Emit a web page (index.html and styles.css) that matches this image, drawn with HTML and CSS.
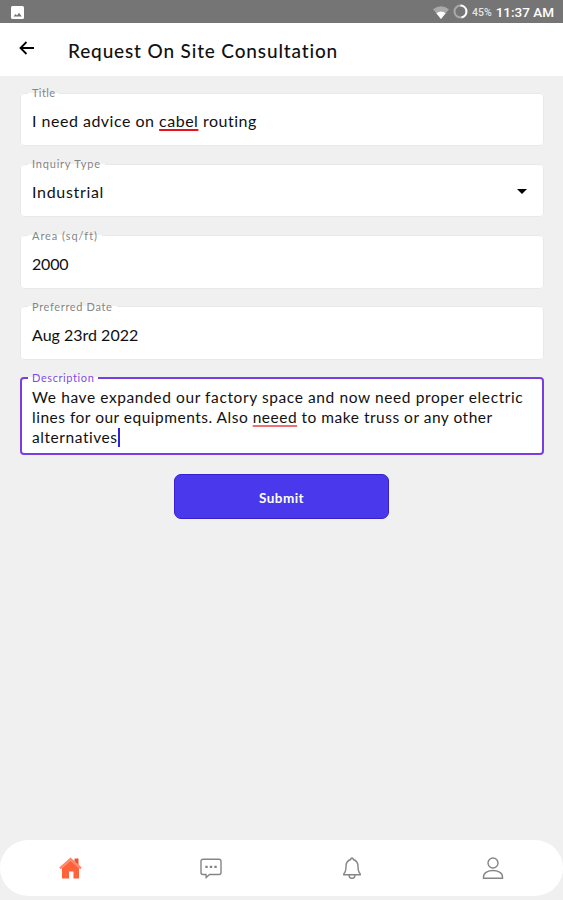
FILE: index.html
```html
<!DOCTYPE html>
<html lang="en">
<head>
    <meta charset="UTF-8">
    <meta name="viewport" content="width=device-width, initial-scale=1.0">
    <title>Request On Site Consultation</title>
    <link rel="stylesheet" href="styles.css">
</head>
<body>
    <div class="status-bar">
        <svg width="13" height="13" viewBox="0 0 13 13">
            <rect width="13" height="13" rx="1.5" fill="#fff"/>
            <path d="M2.5 10.5l2-2.6 1.5 1.5 2-2.6 2.8 3.7z" fill="#757575"/>
        </svg>
        <div class="status-right">
            <svg width="16" height="13" viewBox="0 0 16 13">
                <path d="M0 3.2Q8-2.6 16 3.2L8 13z" fill="#a9a9a9"/>
                <path d="M3.4 7.2Q8 4 12.6 7.2L8 13z" fill="#fff"/>
            </svg>
            <svg class="ring" width="15" height="15" viewBox="0 0 15 15" fill="none" stroke-width="2">
                <circle cx="7.5" cy="7.5" r="6" stroke="#a9a9a9"/>
                <path d="M7.5 1.5a6 6 0 0 1 1 11.9" stroke="#fff"/>
            </svg>
            <span class="battery">45%</span>
            <span class="clock">11:37 AM</span>
        </div>
    </div>

    <header class="app-bar">
        <svg width="16" height="14" viewBox="0 0 16 14" fill="none" stroke="#000" stroke-width="1.8">
            <path d="M15 7H2M7.5 1L1.5 7l6 6"/>
        </svg>
        <h1>Request On Site Consultation</h1>
    </header>

    <main class="form">
        <fieldset class="field">
            <legend>Title</legend>
            <div class="value v-title">I need advice on <span class="typo">cabel</span> routing</div>
        </fieldset>
        <fieldset class="field">
            <legend class="l-type">Inquiry Type</legend>
            <div class="value v-type">Industrial</div>
            <svg class="caret" width="10" height="5" viewBox="0 0 10 5"><path d="M0 0h10L5 5z"/></svg>
        </fieldset>
        <fieldset class="field">
            <legend class="l-area">Area (sq/ft)</legend>
            <div class="value v-area">2000</div>
        </fieldset>
        <fieldset class="field">
            <legend class="l-date">Preferred Date</legend>
            <div class="value">Aug 23rd 2022</div>
        </fieldset>
        <fieldset class="field focused">
            <legend>Description</legend>
            <div class="description">
                <div class="line-1">We have expanded our factory space and now need proper electric</div>
                <div class="line-2">lines for our equipments. Also <span class="typo soft">neeed</span> to make truss or any other</div>
                <div class="line-3">alternatives<span class="cursor"></span></div>
            </div>
        </fieldset>
        <button class="submit">Submit</button>
    </main>

    <nav class="tab-bar">
        <a class="tab">
            <svg width="24" height="24" viewBox="0 0 24 24">
                <path d="M16.5 2.5h4V9l-4-3z" fill="#e9532f"/>
                <path d="M4 12l8.500-7.500L21 12v10.500h-5.500v-7H11v7H4z" fill="#ff623b"/>
                <path d="M2 12.300L12.500 3 23 12.300" fill="none" stroke="#ff8768" stroke-width="2.400"/>
            </svg>
        </a>
        <a class="tab">
            <svg width="24" height="24" viewBox="0 0 24 24" fill="none" stroke="#858585" stroke-width="1.4">
                <path d="M4 3.200h16a2 2 0 0 1 2 2v11.300a2 2 0 0 1-2 2H10.500L7.200 21.500 7 18.500H4a2 2 0 0 1-2-2V5.200a2 2 0 0 1 2-2z"/>
                <path d="M6.300 10.800h2.400M10.800 10.800h2.400M15.300 10.800h2.400" stroke-width="2.200"/>
            </svg>
        </a>
        <a class="tab">
            <svg width="24" height="24" viewBox="0 0 24 24" fill="none" stroke="#858585" stroke-width="1.4">
                <path d="M12 2c-.9 0-1.300.7-1.300 1.500C7.500 4.500 6 7 6 10.500c0 4-.8 6-2.200 7.200v1h16.400v-1C18.800 16.500 18 14.500 18 10.500c0-3.500-1.500-6-4.700-7C13.300 2.700 12.900 2 12 2z"/>
                <path d="M9 18.700c0 4.700 6 4.700 6 0"/>
            </svg>
        </a>
        <a class="tab">
            <svg width="24" height="24" viewBox="0 0 24 24" fill="none" stroke="#858585" stroke-width="1.4">
                <circle cx="12" cy="7" r="5"/>
                <path d="M2.500 22.300v-1.500c0-8.400 19-8.400 19 0v1.500z"/>
            </svg>
        </a>
    </nav>
</body>
</html>
```
FILE: styles.css
```css
* {
    box-sizing: border-box;
}

body {
    margin: 0;
    height: 900px;
    display: flex;
    flex-direction: column;
    background-color: #f0f0f0;
    color: #111;
    font-family: Lato, "Liberation Sans", sans-serif;
    font-variant-ligatures: none;
}

.status-bar {
    height: 23px;
    padding: 1px 9px 0 11px;
    display: flex;
    justify-content: space-between;
    align-items: center;
    background-color: #757575;
    color: #fff;
    font-family: Roboto, sans-serif;
}

.status-right {
    display: flex;
    align-items: center;
}

.ring {
    margin: 0 4px 2px;
}

.battery {
    color: #e4e4e4;
    font-size: 10.5px;
    font-weight: 500;
    margin-right: 4px;
}

.clock {
    font-size: 13.5px;
    font-weight: 500;
}

.app-bar {
    height: 53px;
    padding-left: 19px;
    display: flex;
    align-items: center;
    gap: 33px;
    background-color: #fff;
}

.app-bar svg {
    margin-bottom: 3px;
}

h1 {
    margin: 1px 0 0;
    font-size: 19px;
    font-weight: 500;
    letter-spacing: 0.85px;
    white-space: nowrap;
}

.form {
    flex: 1;
    padding: 10px 19.5px 0;
}

.field {
    position: relative;
    height: 60px;
    margin: 0 0 11.3px;
    padding: 0 10.5px;
    border: 1px solid #e7e9e9;
    border-radius: 4px;
    background-color: #fff;
}

legend {
    height: 14px;
    margin-left: -3px;
    padding: 0 4px;
    color: #858585;
    font-size: 11px;
    line-height: 14px;
    letter-spacing: 0.4px;
    white-space: nowrap;
}

.l-type {
    letter-spacing: 0.8px;
}

.l-area {
    letter-spacing: 0.95px;
}

.l-date {
    letter-spacing: 0.65px;
}

.value {
    padding: 11px 0 0 1px;
    font-size: 16px;
    line-height: 20px;
    white-space: nowrap;
}

.v-title {
    letter-spacing: 0.5px;
}

.v-type {
    letter-spacing: 0.68px;
}

.v-area {
    letter-spacing: -0.2px;
}

.typo {
    text-decoration: underline 2px #e5141c;
    text-decoration-skip-ink: none;
    text-underline-offset: 2px;
}

.typo.soft {
    text-decoration-color: #f26d72;
}

.caret {
    position: absolute;
    right: 16px;
    top: 18px;
}

.focused {
    height: 84px;
    padding: 0 9.5px;
    border: 2px solid #7a3ee0;
}

.focused legend {
    color: #8047ea;
    letter-spacing: 0.6px;
}

.description {
    padding: 3px 0 0 1px;
    font-size: 15.5px;
    line-height: 19.8px;
    letter-spacing: 0.56px;
    white-space: nowrap;
}

.line-1 {
    letter-spacing: 0.6px;
}

.line-2 {
    letter-spacing: 0.5px;
}

.cursor {
    display: inline-block;
    width: 2px;
    height: 19px;
    vertical-align: -4px;
    background-color: #3322d8;
}

.submit {
    display: block;
    width: 215px;
    height: 45px;
    margin: 19px auto 0;
    padding: 2px 0 0;
    border: 1px solid #3820cf;
    border-radius: 7px;
    background-color: #4a38ec;
    color: #fff;
    font-family: inherit;
    font-size: 13.5px;
    font-weight: bold;
    letter-spacing: 0.45px;
}

.tab-bar {
    height: 56px;
    margin-bottom: 4px;
    display: flex;
    align-items: center;
    border-radius: 28px;
    background-color: #fff;
}

.tab {
    flex: 1;
    display: flex;
    justify-content: center;
}
```
